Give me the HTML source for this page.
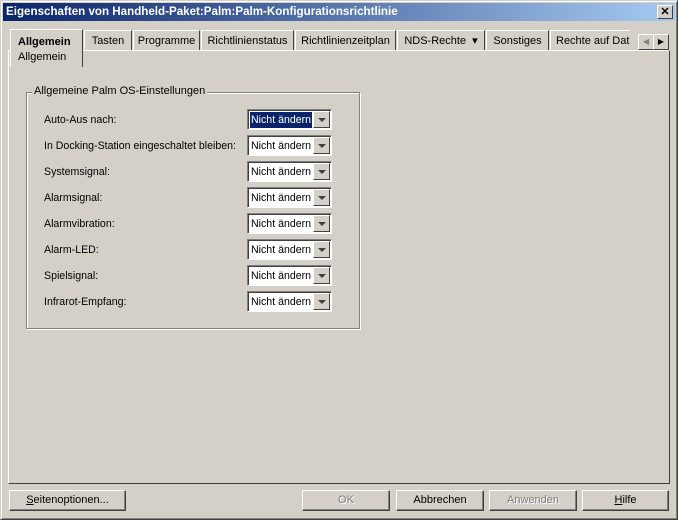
<!DOCTYPE html><html><head><style>
*{box-sizing:border-box}
body{margin:0;width:678px;height:520px;background:#d4d0c8;font:10.6px "Liberation Sans",sans-serif;position:relative;overflow:hidden;color:#000}
.a{position:absolute}
.win{left:0;top:0;width:678px;height:520px;border:1px solid;border-color:#d4d0c8 #404040 #404040 #d4d0c8;box-shadow:inset 1px 1px #fff,inset -1px -1px #808080}
.title{left:3px;top:3px;width:672px;height:18px;background:linear-gradient(90deg,#0a246a,#a6caf0);color:#fff;font-weight:bold;font-size:11.6px;line-height:18px;padding-left:3px}
.x{right:5px;top:5px;width:16px;height:14px;background:#d4d0c8;border:1px solid;border-color:#fff #404040 #404040 #fff;text-align:center;line-height:12px;font-weight:bold;font-size:11px;color:#000}
.tab{top:30px;height:20px;border:1px solid;border-color:#fff #404040 transparent #fff;border-bottom:none;text-align:center;line-height:20px;font-size:11px}
.panel{left:8px;top:50px;width:662px;height:434px;border:1px solid;border-color:#fff #404040 #404040 #fff}
.grp{left:26px;top:92px;width:334px;height:237px;border:1px solid #808080;box-shadow:1px 1px #fff,inset 1px 1px #fff}
.lbl{left:44px;font-size:10.6px}
.dd{left:247px;width:85px;height:21px;border:1px solid;border-color:#808080 #fff #fff #808080;box-shadow:inset 1px 1px #404040;background:#fff;padding:2px 0 0 2px;font-size:10.6px;line-height:16px}
.dd span{display:inline-block;padding:0 1px;height:16px}
.dd b{position:absolute;right:1px;top:1px;width:17px;height:17px;background:#d4d0c8;border:1px solid;border-color:#fff #404040 #404040 #fff}
.dd b:after{content:"";position:absolute;left:4px;top:6px;border:3px solid transparent;border-left-width:4px;border-right-width:4px;border-top:4px solid #404040;border-bottom:0}
.btn{top:490px;height:21px;border:1px solid;border-color:#fff #404040 #404040 #fff;box-shadow:inset -1px -1px #808080;text-align:center;line-height:19px;font-size:11px}
.dis{color:#808080;text-shadow:1px 1px #fff}
</style></head><body>
<div class="a win"></div>
<div class="a title">Eigenschaften von Handheld-Paket:Palm:Palm-Konfigurationsrichtlinie</div>
<div class="a x">✕</div>
<div class="a panel"></div>
<div class="a tab" style="left:84px;width:48px">Tasten</div>
<div class="a tab" style="left:133px;width:67px">Programme</div>
<div class="a tab" style="left:201px;width:93px">Richtlinienstatus</div>
<div class="a tab" style="left:295px;width:101px">Richtlinienzeitplan</div>
<div class="a tab" style="left:397px;width:88px">NDS-Rechte &nbsp;▾</div>
<div class="a tab" style="left:486px;width:63px">Sonstiges</div>
<div class="a tab" style="left:550px;width:80px;text-align:left;padding-left:5px;overflow:hidden;white-space:nowrap;border-right:none">Rechte auf Dat</div>
<div class="a" style="left:10px;top:29px;width:73px;height:40px;background:#d4d0c8;border:1px solid;border-color:#fff #404040 #fff #fff;border-bottom:none;padding:5px 0 0 7px;line-height:15px;font-size:11px"><b>Allgemein</b><br>Allgemein</div>
<div class="a" style="left:10px;top:67px;width:73px;height:2px;background:#d4d0c8"></div>
<div class="a" style="left:638px;top:34px;width:16px;height:16px;border:1px solid;border-color:#fff #404040 #404040 #fff;color:#808080;font-size:8px;text-align:center;line-height:14px">◀</div>
<div class="a" style="left:653px;top:34px;width:16px;height:16px;border:1px solid;border-color:#fff #404040 #404040 #fff;font-size:8px;text-align:center;line-height:14px">▶</div>
<div class="a grp"></div>
<div class="a" style="left:32px;top:85px;background:#d4d0c8;padding:0 2px;font-size:11px">Allgemeine Palm OS-Einstellungen</div>
<div class="a lbl" style="top:114px">Auto-Aus nach:</div>
<div class="a lbl" style="top:140px">In Docking-Station eingeschaltet bleiben:</div>
<div class="a lbl" style="top:166px">Systemsignal:</div>
<div class="a lbl" style="top:192px">Alarmsignal:</div>
<div class="a lbl" style="top:218px">Alarmvibration:</div>
<div class="a lbl" style="top:244px">Alarm-LED:</div>
<div class="a lbl" style="top:270px">Spielsignal:</div>
<div class="a lbl" style="top:296px">Infrarot-Empfang:</div>
<div class="a dd" style="top:109px"><span style="background:#0a246a;color:#fff">Nicht ändern</span><b></b></div>
<div class="a dd" style="top:135px"><span>Nicht ändern</span><b></b></div>
<div class="a dd" style="top:161px"><span>Nicht ändern</span><b></b></div>
<div class="a dd" style="top:187px"><span>Nicht ändern</span><b></b></div>
<div class="a dd" style="top:213px"><span>Nicht ändern</span><b></b></div>
<div class="a dd" style="top:239px"><span>Nicht ändern</span><b></b></div>
<div class="a dd" style="top:265px"><span>Nicht ändern</span><b></b></div>
<div class="a dd" style="top:291px"><span>Nicht ändern</span><b></b></div>
<div class="a btn" style="left:9px;width:117px"><u>S</u>eitenoptionen...</div>
<div class="a btn dis" style="left:302px;width:88px">OK</div>
<div class="a btn" style="left:396px;width:88px">Abbrechen</div>
<div class="a btn dis" style="left:489px;width:88px">Anwenden</div>
<div class="a btn" style="left:582px;width:87px"><u>H</u>ilfe</div>
</body></html>
